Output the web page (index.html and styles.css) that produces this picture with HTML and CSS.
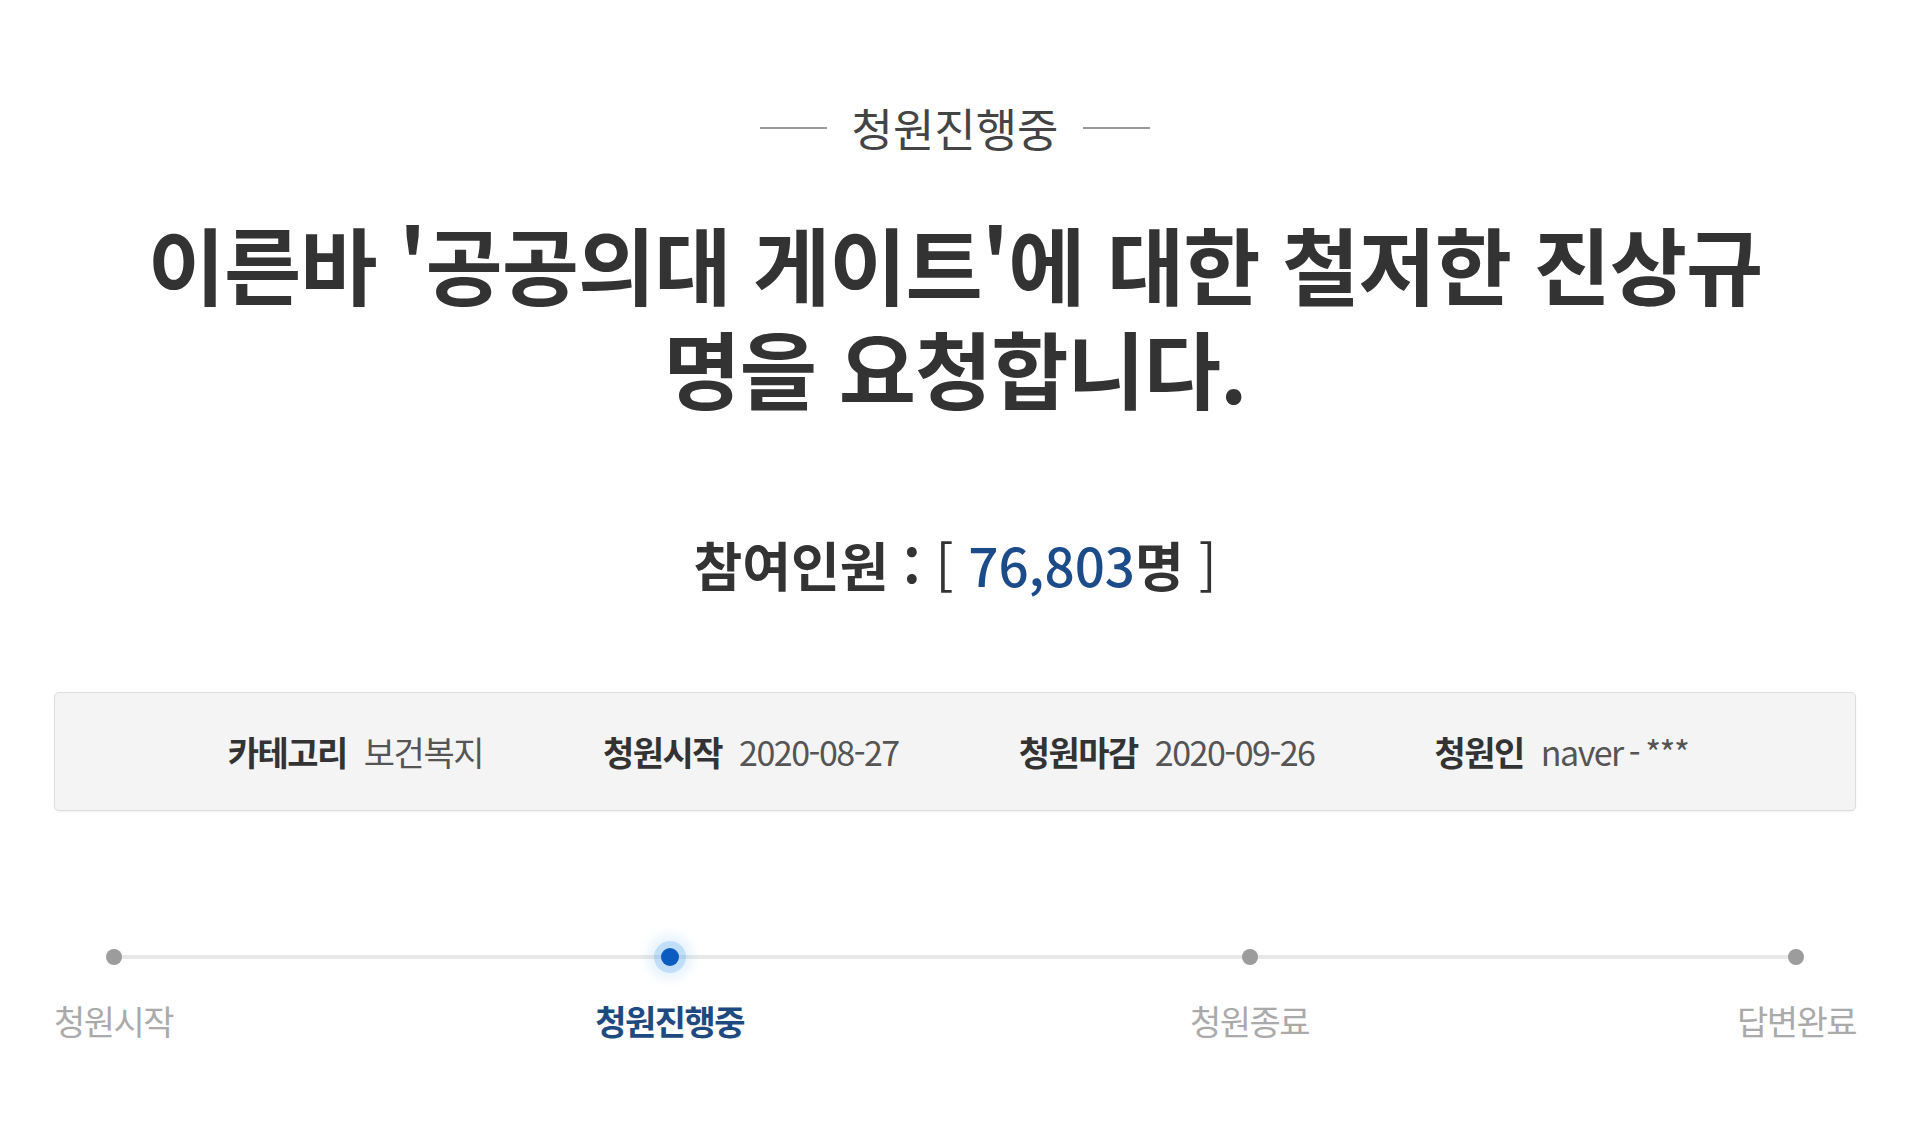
FILE: index.html
```html
<!DOCTYPE html>
<html lang="ko">
<head>
<meta charset="utf-8">
<title>청원진행중</title>
<link rel="stylesheet" href="styles.css">
</head>
<body>
<main class="wrap">
  <div class="status">
    <span class="status-line"></span>
    <span class="status-text">청원진행중</span>
    <span class="status-line"></span>
  </div>
  <h1 class="title">이른바 '공공의대 게이트'에 대한 철저한 진상규<br>명을 요청합니다.</h1>
  <div class="count">
    <span class="count-label">참여인원 :</span>
    <span class="bracket">[</span>
    <span class="count-num">76,803</span><span class="count-unit">명</span>
    <span class="bracket">]</span>
  </div>
  <ul class="info">
    <li class="info-item"><span class="info-label">카테고리</span><span class="info-value">보건복지</span></li>
    <li class="info-item"><span class="info-label">청원시작</span><span class="info-value">2020-08-27</span></li>
    <li class="info-item"><span class="info-label">청원마감</span><span class="info-value">2020-09-26</span></li>
    <li class="info-item"><span class="info-label">청원인</span><span class="info-value tight">naver - ***</span></li>
  </ul>
  <ol class="progress">
    <li class="step step-1"><span class="dot"></span><span class="step-label">청원시작</span></li>
    <li class="step step-2 active"><span class="dot"></span><span class="step-label">청원진행중</span></li>
    <li class="step step-3"><span class="dot"></span><span class="step-label">청원종료</span></li>
    <li class="step step-4"><span class="dot"></span><span class="step-label">답변완료</span></li>
  </ol>
</main>
</body>
</html>
```
FILE: styles.css
```css
* { box-sizing: border-box; }
html, body { margin: 0; padding: 0; background: #ffffff; }
body {
  font-family: "Noto Sans CJK KR", "Noto Sans", sans-serif;
  color: #333;
}
.wrap {
  width: 1802px;
  margin-left: 54px;
  padding-top: 104px;
}
.status {
  display: flex;
  justify-content: center;
  align-items: center;
  gap: 24px;
  height: 48px;
  font-size: 45px;
  line-height: 48px;
  color: #444;
}
.status-line {
  display: block;
  width: 67px;
  height: 2px;
  background: #9a9a9a;
}
.title {
  margin: 59px 0 0;
  font-size: 84px;
  line-height: 104px;
  font-weight: 700;
  letter-spacing: -1px;
  text-align: center;
  color: #333;
  white-space: nowrap;
}
.count {
  margin-top: 113px;
  text-align: center;
  font-size: 53px;
  line-height: 64px;
  color: #333;
}
.count-label { font-weight: 700; }
.bracket { font-weight: 400; }
.count-num { color: #1b4b89; font-weight: 500; }
.count-unit { font-weight: 700; }
.info {
  list-style: none;
  margin: 96px 0 0;
  padding: 0 0 0 6px;
  height: 119px;
  display: flex;
  justify-content: center;
  align-items: center;
  gap: 120px;
  background: #f4f4f4;
  border: 1px solid #dedede;
  border-radius: 5px;
  box-shadow: 0 1px 2px rgba(0,0,0,0.06);
}
.info-item {
  display: flex;
  align-items: center;
  gap: 17px;
  font-size: 34px;
  line-height: 44px;
  letter-spacing: -1.5px;
}
.info-label { font-weight: 700; color: #333; }
.info-value { font-weight: 400; color: #555; }
.info-value.tight { word-spacing: -2px; }
.progress {
  list-style: none;
  margin: 126px 0 0;
  padding: 0;
  display: flex;
  position: relative;
}
.progress::before {
  content: "";
  position: absolute;
  left: 60px;
  right: 60px;
  top: 18px;
  height: 4px;
  background: #e8e8e8;
  border-radius: 2px;
}
.step {
  display: flex;
  flex-direction: column;
  align-items: center;
  gap: 22px;
  position: relative;
}
.step-2 { margin-left: 422px; }
.step-3 { margin-left: 446px; }
.step-4 { margin-left: auto; }
.dot {
  width: 40px;
  height: 40px;
  display: flex;
  align-items: center;
  justify-content: center;
}
.dot::after {
  content: "";
  width: 16px;
  height: 16px;
  border-radius: 50%;
  background: #9c9c9c;
}
.step.active .dot::after {
  width: 18px;
  height: 18px;
  background: #0b5bc0;
  box-shadow: 0 0 0 7px rgba(90, 165, 240, 0.28), 0 0 10px 14px rgba(120, 185, 245, 0.16);
}
.step-label {
  font-size: 34px;
  line-height: 44px;
  color: #aaaaaa;
  letter-spacing: -1.5px;
}
.step.active .step-label {
  color: #1e4a80;
  font-weight: 700;
}
```
